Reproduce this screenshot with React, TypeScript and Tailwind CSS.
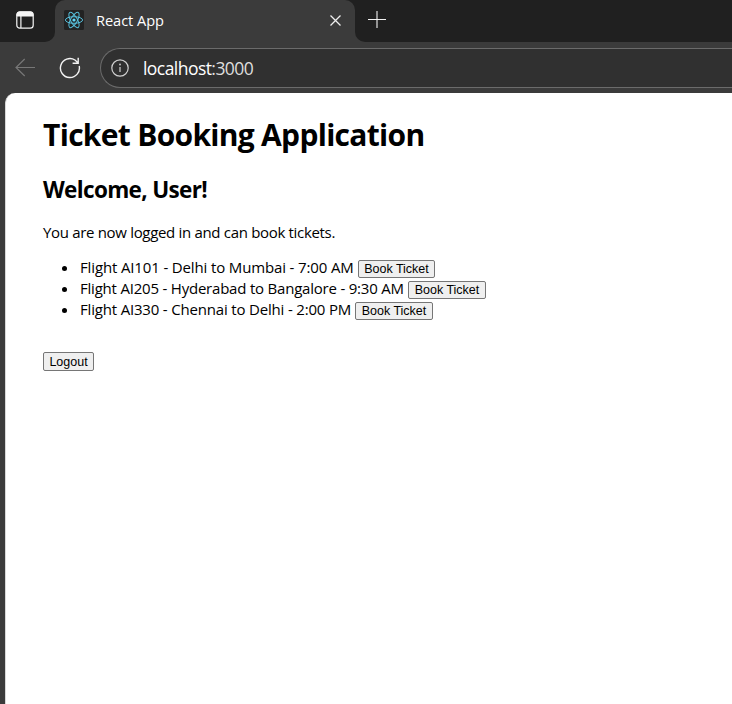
import React from "react";

const flights = [
  { label: "Flight AI101 - Delhi to Mumbai - 7:00 AM", width: "w-[278px]", spacing: "tracking-[-0.14px]", button: "w-[77px]" },
  { label: "Flight AI205 - Hyderabad to Bangalore - 9:30 AM", width: "w-[328px]", spacing: "tracking-[-0.21px]", button: "w-[78px]" },
  { label: "Flight AI330 - Chennai to Delhi - 2:00 PM", width: "w-[275px]", spacing: "tracking-[-0.18px]", button: "w-[78px]" },
];

const buttonClass =
  "flex items-center justify-center rounded-[2px] border border-[#767676] bg-[#efefef] font-['Liberation_Sans',Arial,sans-serif] text-[12.5px] leading-none tracking-normal whitespace-nowrap";

function TabActionsIcon() {
  return (
    <svg className="ml-4 mt-[11px] h-[18px] w-[18px] shrink-0" viewBox="0 0 18 18" fill="none" stroke="#f5f5f5">
      <rect x="0.8" y="0.8" width="16.4" height="16.4" rx="3" strokeWidth="1.2" />
      <path d="M1 5V3.5Q1 1 3.5 1h11Q17 1 17 3.5V5Z" fill="#f5f5f5" />
      <path d="M4.9 5v12" strokeWidth="1.2" />
    </svg>
  );
}

function ReactIcon() {
  return (
    <svg className="h-5 w-5 shrink-0" viewBox="0 0 20 20" fill="none" stroke="#61dafb" strokeWidth="1">
      <rect width="20" height="20" rx="1.5" fill="#222" stroke="none" />
      <g opacity="0.85">
        <ellipse cx="10" cy="10" rx="8.6" ry="3.3" />
        <ellipse cx="10" cy="10" rx="8.6" ry="3.3" transform="rotate(60 10 10)" />
        <ellipse cx="10" cy="10" rx="8.6" ry="3.3" transform="rotate(120 10 10)" />
      </g>
      <circle cx="10" cy="10" r="1.6" fill="#61dafb" stroke="none" />
    </svg>
  );
}

function TabStrip() {
  return (
    <div className="flex h-[42px] bg-[#3b3b3b] text-white">
      <div className="flex w-[55px] shrink-0 bg-[#3b3b3b]">
        <div className="w-[55px] rounded-br-[10px] bg-[#202020]">
          <TabActionsIcon />
        </div>
      </div>
      <div className="w-[300px] shrink-0 bg-[#202020]">
        <div className="flex h-[42px] items-center rounded-t-[10px] bg-[#3b3b3b] pb-[2px] pl-[9px]">
          <ReactIcon />
          <span className="ml-3 w-[233px] text-[14.6px] leading-5 tracking-[-0.05px]">React App</span>
          <svg className="mt-[1px] h-[13px] w-[13px] shrink-0" viewBox="0 0 13 13" stroke="#eee" strokeWidth="1.3">
            <path d="M1.5 1.5 11.5 11.5M11.5 1.5 1.5 11.5" />
          </svg>
        </div>
      </div>
      <div className="grow rounded-bl-[10px] bg-[#202020] pl-[13px] pt-[11px]">
        <svg className="h-[18px] w-[18px]" viewBox="0 0 18 18" stroke="#f3f3f3" strokeWidth="1.1">
          <path d="M9 0v17M0 8.5h18" />
        </svg>
      </div>
    </div>
  );
}

function Toolbar() {
  return (
    <div className="flex h-[51px] items-center bg-[#3b3b3b]">
      <svg className="ml-[15px] h-5 w-5 shrink-0" viewBox="0 0 20 20" fill="none" stroke="#777" strokeWidth="1.2">
        <path d="M9.7 1 1 9.5l8.7 8.5M1 9.5h19" />
      </svg>
      <svg className="ml-6 h-[22px] w-[22px] shrink-0" viewBox="0 0 22 22" fill="none" stroke="#f2f2f2" strokeWidth="1.4">
        <path d="M20.2 9A9.5 9.5 0 1 1 16 3l3.2 3M19.2 0.8V6.2H13.6" />
      </svg>
      <div className="ml-[19px] mt-[1px] flex h-10 grow items-center rounded-l-full border border-r-0 border-[#6b6b6b] bg-[#303030] pl-[10px]">
        <svg className="h-[18px] w-[18px] shrink-0" viewBox="0 0 18 18" fill="none" stroke="#d0d0d0" strokeWidth="1.2">
          <circle cx="9" cy="9" r="8.2" />
          <path d="M9 8v5" />
          <circle cx="9" cy="5.5" r="0.9" fill="#d0d0d0" stroke="none" />
        </svg>
        <span className="-mt-[1px] ml-[14px] text-[17.5px] leading-6 tracking-[-0.55px] text-white">
          localhost<span className="text-[#dedede]">:3000</span>
        </span>
      </div>
    </div>
  );
}

export default function App() {
  return (
    <div className="flex h-[704px] w-[732px] flex-col overflow-hidden bg-[#3b3b3b] font-['Segoe_UI','Open_Sans',sans-serif]">
      <TabStrip />
      <Toolbar />
      <main className="ml-[5px] grow rounded-tl-[10px] border-l border-[#d8d8d8] bg-white pl-[37px] pt-[21px] text-[15px] text-black">
        <h1 className="h-[42px] whitespace-nowrap text-[30px] font-bold leading-[42px] tracking-[-0.7px]">Ticket Booking Application</h1>
        <h2 className="mt-[18px] h-8 whitespace-nowrap text-[22.5px] font-bold leading-8 tracking-[-0.65px]">Welcome, User!</h2>
        <p className="mt-[16px] h-[21px] whitespace-nowrap leading-[21px] tracking-[-0.32px]">You are now logged in and can book tickets.</p>
        <ul className="mt-[14px]">
          {flights.map((flight) => (
            <li key={flight.label} className="flex h-[21px] items-center">
              <span className="ml-[19px] mr-[13px] mt-[2px] h-[5px] w-[5px] shrink-0 rounded-full bg-black" />
              <span className={`${flight.width} ${flight.spacing} shrink-0 whitespace-nowrap leading-[21px]`}>{flight.label}</span>
              <button className={`${buttonClass} ${flight.button} mt-[2px] h-[18px] pt-[1px]`}>Book Ticket</button>
            </li>
          ))}
        </ul>
        <button className={`${buttonClass} mt-[32px] h-[19px] w-[51px] pt-[1px]`}>Logout</button>
      </main>
    </div>
  );
}
